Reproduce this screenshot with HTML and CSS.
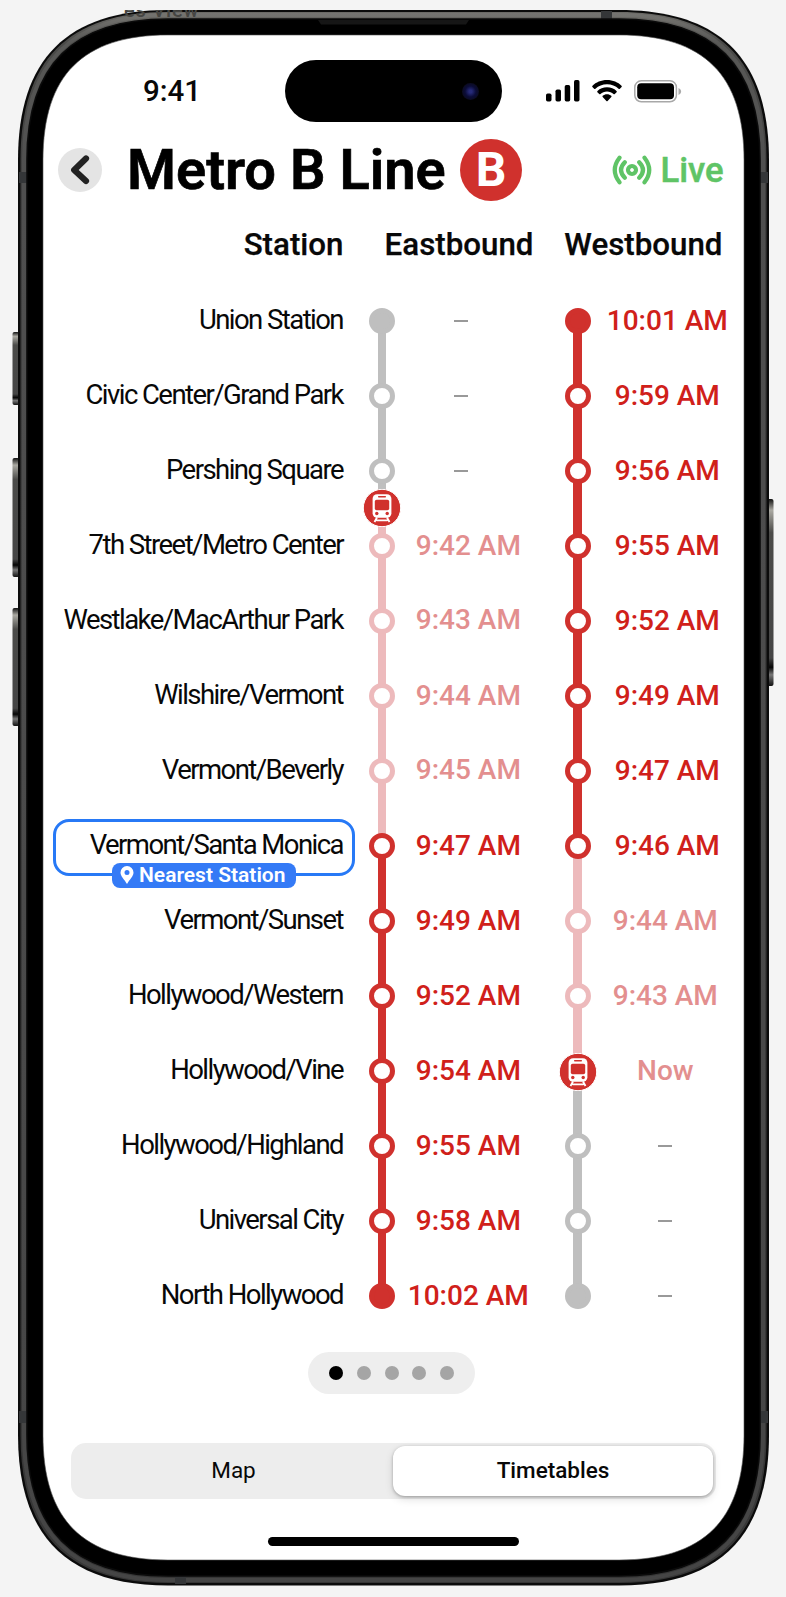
FILE: index.html
```html
<!DOCTYPE html>
<html lang="en">
<head>
<meta charset="utf-8">
<title>Metro B Line</title>
<link rel="stylesheet" href="styles.css">
</head>
<body>
<svg class="shell" viewBox="0 0 786 1597" aria-hidden="true">
  <defs>
    <linearGradient id="key" x1="0" x2="0" y1="0" y2="1">
      <stop offset="0" stop-color="#111"/><stop offset=".06" stop-color="#aaa9a2"/><stop offset=".18" stop-color="#4b4b49"/><stop offset=".85" stop-color="#454545"/><stop offset=".9" stop-color="#050505"/><stop offset=".94" stop-color="#777"/><stop offset="1" stop-color="#111"/>
    </linearGradient>
    <linearGradient id="metal" x1="0" x2="0" y1="0" y2="1">
      <stop offset="0" stop-color="#6b6a66"/><stop offset=".02" stop-color="#4a4a48"/><stop offset=".12" stop-color="#404040"/><stop offset="1" stop-color="#363636"/>
    </linearGradient>
  </defs>
  <g fill="url(#key)">
    <rect x="12.5" y="332" width="7" height="73" rx="2"/>
    <rect x="12.5" y="458" width="7" height="119" rx="2"/>
    <rect x="12.5" y="608" width="7" height="118" rx="2"/>
    <rect x="766" y="499" width="7.500" height="187" rx="2"/>
  </g>
  <path class="edge" d="M18 160C18 59 67 10 168 10H619C720 10 769 59 769 160V1435C769 1536 720 1585.500 619 1585.500H168C67 1585.500 18 1536 18 1435Z"/>
  <path fill="url(#metal)" d="M20.500 160C20.500 60 68 12 168 12H619C719 12 766.500 60 766.500 160V1435C766.500 1535 719 1583 619 1583H168C68 1583 20.500 1535 20.500 1435Z"/>
  <path class="sheen" d="M24 160C24 63 71 15 168 15H619C716 15 763 63 763 160V1435C763 1532 716 1580 619 1580H168C71 1580 24 1532 24 1435Z"/>
  <g class="band">
    <rect x="19" y="172" width="8" height="11"/><rect x="760" y="172" width="8" height="11"/>
    <rect x="19" y="1411" width="8" height="12"/><rect x="760" y="1411" width="8" height="12"/>
    <rect x="601" y="11" width="11" height="8"/><rect x="175" y="1576" width="11" height="8"/>
  </g>
  <path class="bezel" d="M27 160C27 65 73 19 168 19H619C714 19 760 65 760 160V1435C760 1530 714 1576 619 1576H168C73 1576 27 1530 27 1435Z"/>
  <path class="speaker" d="M318 20H469L466 24.500H321Z"/>
  <path class="glass" d="M43 160C43 75 83 35 168 35H619C704 35 744 75 744 160V1435C744 1520 704 1560 619 1560H168C83 1560 43 1520 43 1435Z"/>
</svg>
<div class="shade-text"><span>es View</span></div>

<main class="screen">
  <header class="status">
    <span class="clock">9:41</span>
    <div class="island"><i class="lens"></i></div>
    <div class="signals">
      <svg width="34" height="22" viewBox="0 0 34 22"><rect y="13.500" width="5.500" height="8" rx="1.700"/><rect x="9.500" y="9.500" width="5.500" height="12" rx="1.700"/><rect x="18.700" y="5" width="5.500" height="16.500" rx="1.700"/><rect x="28" y="0" width="5.500" height="21.500" rx="1.700"/></svg>
      <svg width="30" height="22" viewBox="0 0 30 22"><path d="M15 0C21 0 26 2.300 29.500 5.700C30 6.200 30 6.600 29.600 7L27.900 8.700C27.500 9.100 27 9.100 26.600 8.700C23.500 5.900 19.500 4.300 15 4.300S6.500 5.900 3.400 8.700C3 9.100 2.500 9.100 2.100 8.700L.4 7C0 6.600 0 6.200.5 5.700C4 2.300 9 0 15 0ZM15 7.300C18.900 7.300 22 8.700 24.500 10.900C25 11.300 25 11.800 24.600 12.200L22.800 14C22.400 14.400 21.900 14.300 21.500 14C19.800 12.400 17.600 11.500 15 11.500S10.200 12.400 8.500 14C8.100 14.300 7.600 14.400 7.200 14L5.400 12.200C5 11.800 5 11.300 5.500 10.900C8 8.700 11.100 7.300 15 7.300ZM15 14.200C16.700 14.200 18.200 14.800 19.300 15.800C19.700 16.100 19.700 16.600 19.300 17L15.600 21C15.200 21.300 14.800 21.300 14.400 21L10.700 17C10.300 16.600 10.300 16.100 10.700 15.800C11.800 14.800 13.300 14.200 15 14.200Z"/></svg>
      <svg width="48" height="23" viewBox="0 0 48 23"><rect x=".8" y=".8" width="41.600" height="21" rx="6.500" fill="none" stroke="#a8a8a8" stroke-width="1.500"/><rect x="3.200" y="3.300" width="36.800" height="16" rx="4"/><path d="M44.500 8C48 9.500 48 13.500 44.500 15Z" fill="#aaa"/></svg>
    </div>
  </header>

  <div class="titlebar">
    <button class="back" aria-label="Back"><svg width="44" height="44" viewBox="0 0 44 44"><path d="M28 10.500L16.200 22L28 33" fill="none" stroke="#222" stroke-width="6.200" stroke-linecap="round" stroke-linejoin="round"/></svg></button>
    <h1>Metro B Line</h1>
    <span class="badge">B</span>
    <div class="live">
      <svg width="40" height="30" viewBox="-20 -15 40 30" fill="none" stroke="#5fc466" stroke-width="4.200" stroke-linecap="round"><circle r="4" stroke-width="4.200"/><path d="M-7.200 -7.800Q-14.800 0 -7.200 7.800M7.200 -7.800Q14.800 0 7.200 7.800M-12.500 -12.300Q-22 0 -12.500 12.300M12.500 -12.300Q22 0 12.500 12.300"/></svg>
      <span>Live</span>
    </div>
  </div>

  <div class="columns"><span class="c-station">Station</span><span class="c-east">Eastbound</span><span class="c-west">Westbound</span></div>

  <section class="table" id="table"></section>

  <nav class="pager"><i class="on"></i><i></i><i></i><i></i><i></i></nav>
  <div class="tabs"><button>Map</button><button class="selected">Timetables</button></div>
  <div class="home"></div>
</main>

<template id="train"><svg class="train" width="38" height="38" viewBox="-19 -19 38 38"><circle r="18.700" fill="#d0312d" stroke="#fff" stroke-width="1"/><rect x="-9.400" y="-13.700" width="18.800" height="23.500" rx="4.500" fill="#fff"/><g fill="#d0312d"><rect x="-4" y="-12.100" width="8" height="1.500" rx=".7"/><rect x="-7.200" y="-8.200" width="14.400" height="10.500" rx="1.800"/><circle cx="-5.200" cy="5.500" r="1.700"/><circle cx="5.200" cy="5.500" r="1.700"/></g><path d="M-5 9.500L-7.500 14M5 9.500L7.500 14M-5.500 12.300H5.500" fill="none" stroke="#fff" stroke-width="1.800"/></svg></template>
<template id="nearest"><span class="nearest"><svg width="14" height="18" viewBox="0 0 14 18"><path fill="#fff" fill-rule="evenodd" d="M7 0A6.500 6.500 0 0 0 .5 6.500C.5 10.500 4.500 13.500 7 18C9.500 13.500 13.500 10.500 13.500 6.500A6.500 6.500 0 0 0 7 0ZM7 4A2.500 2.500 0 1 1 7 9A2.500 2.500 0 0 1 7 4Z"/></svg>Nearest Station</span></template>
<script src="app.js"></script>
</body>
</html>
```

FILE: styles.css
```css
*, ::before { box-sizing: border-box; }
body { margin: 0; width: 786px; height: 1597px; overflow: hidden; position: relative; background: #f4f4f4; font-family: Roboto, sans-serif; color: #080808; }
button { border: 0; padding: 0; background: none; font: inherit; color: inherit; }
.shell { position: absolute; inset: 0; width: 786px; height: 1597px; }
.edge { fill: #0b0b0b; }
.sheen { fill: none; stroke: #fff; stroke-opacity: .08; stroke-width: 4; }
.band { fill: #343638; }
.bezel { fill: #000; stroke: #0a0a0a; stroke-width: 1.500px; }
.speaker { fill: #161616; }
.glass { fill: #fff; stroke: #555; stroke-width: .6; }
.shade-text { position: absolute; left: 124px; top: 10px; width: 80px; height: 8px; overflow: hidden; color: #454542; font-size: 20px; font-weight: 500; letter-spacing: .8px; line-height: 24px; }
.shade-text span { display: block; margin-top: -12px; white-space: nowrap; }

.screen { position: relative; margin: 35px 42px 0 43px; height: 1525px; display: flex; flex-direction: column; }
.screen > * { flex-shrink: 0; }
.status { display: flex; height: 62px; margin-top: 25px; align-items: center; }
.clock { width: 242px; padding-left: 100px; font-size: 29.500px; font-weight: 500; line-height: 34px; }
.island { width: 217px; height: 62px; border-radius: 31px; background: #000; display: flex; align-items: center; justify-content: flex-end; padding-right: 23px; }
.lens { width: 17px; height: 17px; border-radius: 50%; background: radial-gradient(circle, #262a78 0 12%, #0b0c38 45%, #0b0b20 70%); }
.signals { display: flex; align-items: center; margin-left: 44px; gap: 12px; }

.titlebar { display: flex; align-items: center; height: 62px; margin-top: 17px; padding-left: 15px; }
.back { width: 44px; height: 44px; border-radius: 50%; background: #e4e4e4; }
.back svg { display: block; }
h1 { margin: 0 0 0 25px; width: 333px; font-size: 56px; line-height: 62px; font-weight: 600; white-space: nowrap; color: #000; -webkit-text-stroke: .7px #000; }
.badge { width: 62px; height: 62px; border-radius: 50%; background: #d0312d; color: #fff; font-size: 48px; line-height: 62px; font-weight: 700; text-align: center; }
.live { margin-left: 90px; display: flex; align-items: center; gap: 8.500px; color: #5fc466; font-size: 34.700px; line-height: 40px; font-weight: 500; -webkit-text-stroke: .5px #5fc466; }

.columns { display: flex; height: 46px; margin-top: 21px; font-size: 31.300px; line-height: 46px; font-weight: 500; white-space: nowrap; -webkit-text-stroke: .25px #080808; }
.c-station { width: 300.500px; text-align: right; }
.c-east { width: 190px; text-align: right; }
.c-west { width: 189px; text-align: right; }

.table { margin-top: 15.500px; }
.row { display: grid; grid-template-columns: 300px 78px 117.600px 78px 101.400px; height: 75px; align-items: center; }
.name { position: relative; text-align: right; font-size: 27.500px; letter-spacing: -1.550px; line-height: 34px; padding-bottom: 2px; white-space: nowrap; }
.here::before { content: ""; position: absolute; left: 10px; right: -12px; top: -9.500px; height: 57.500px; border: 3px solid #2779f6; border-radius: 16px; }
.nearest { position: absolute; left: 69px; top: 34.500px; width: 184px; height: 25px; border-radius: 8px; background: #347af6; color: #fff; display: flex; align-items: center; padding-left: 8px; gap: 5px; font-size: 21px; font-weight: 600; letter-spacing: 0; line-height: 25px; }
.node { position: relative; height: 75px; display: grid; grid-template-rows: 1fr 1fr; justify-items: center; }
.node > i { width: 8.500px; }
.node > b { position: absolute; left: 26px; top: 24.500px; width: 26px; height: 26px; border: 5px solid; border-radius: 50%; background: #fff; }
.node > b.full { background: currentColor; }
.gray { color: #bfbfbf; } .pink { color: #edbabc; } .red { color: #d0312d; }
.node > i { background: currentColor; }
.node > i.none { background: none; }
.train { position: absolute; left: 20px; top: 19.500px; }
.between { top: 55px; z-index: 2; }
.time { text-align: center; font-size: 28px; line-height: 34px; font-weight: 500; color: #d0201a; white-space: nowrap; display: flex; justify-content: center; }
.time.east { padding-right: 23px; }
.time.soft { color: #e38f8f; }
.time.west.soft, .time.west.empty { padding-right: 4px; }
.time.east.empty { padding-right: 38px; }
.time.up { padding-bottom: 3px; }
.dash { width: 14px; height: 2.500px; background: #999; }

.pager { align-self: flex-start; margin: 18.500px 0 0 265px; width: 167px; height: 42px; border-radius: 21px; background: #eee; display: flex; align-items: center; justify-content: center; gap: 13.900px; }
.pager i { width: 14px; height: 14px; border-radius: 50%; background: #a5a5a5; }
.pager .on { background: #000; }
.tabs { margin: 49px 28px 0; height: 56px; width: 645px; border-radius: 15px; background: #ededed; display: flex; padding: 3px; font-size: 22.500px; }
.tabs button { width: 319px; height: 50px; padding-bottom: 2px; border-radius: 12px; }
.tabs .selected { width: 320px; background: #fff; font-weight: 500; box-shadow: 0 1px 3px #0004, 0 3px 8px #0002; }
.home { margin: 38px 0 0 225px; width: 251px; height: 9px; border-radius: 5px; background: #000; }
```

FILE: app.js
```js
const stations = [
  ["Union Station", "", "10:01 AM"],
  ["Civic Center/Grand Park", "", "9:59 AM"],
  ["Pershing Square", "", "9:56 AM"],
  ["7th Street/Metro Center", "9:42 AM", "9:55 AM"],
  ["Westlake/MacArthur Park", "9:43 AM", "9:52 AM"],
  ["Wilshire/Vermont", "9:44 AM", "9:49 AM"],
  ["Vermont/Beverly", "9:45 AM", "9:47 AM"],
  ["Vermont/Santa Monica", "9:47 AM", "9:46 AM"],
  ["Vermont/Sunset", "9:49 AM", "9:44 AM"],
  ["Hollywood/Western", "9:52 AM", "9:43 AM"],
  ["Hollywood/Vine", "9:54 AM", "Now"],
  ["Hollywood/Highland", "9:55 AM", ""],
  ["Universal City", "9:58 AM", ""],
  ["North Hollywood", "10:02 AM", ""]
];
const last = stations.length - 1;
const train = document.getElementById("train").innerHTML;
const nearest = document.getElementById("nearest").innerHTML;
const eastColor = i => (i < 3 ? "gray" : i < 7 ? "pink" : "red");
const westColor = i => (i < 8 ? "red" : i < 11 ? "pink" : "gray");
const time = (text, cls) => `<div class="time ${cls} ${text ? "" : "empty"}">${text || '<i class="dash"></i>'}</div>`;

document.getElementById("table").innerHTML = stations.map(([name, east, west], i) => {
  const e = eastColor(i), w = westColor(i);
  const eastNode = `<i class="${i ? eastColor(i - 1 === 2 ? 3 : i - 1) : "none"}"></i><i class="${i < last ? e : "none"}"></i><b class="${e} ${i === 0 || i === last ? "full" : ""}"></b>${i === 2 ? train.replace('class="train"', 'class="train between"') : ""}`;
  const westDot = i === 10 ? train : `<b class="${w} ${i === 0 || i === last ? "full" : ""}"></b>`;
  const westNode = `<i class="${i ? w : "none"}"></i><i class="${i === last ? "none" : westColor(i + 1)}"></i>${westDot}`;
  return `<div class="row"><div class="name ${i === 7 ? "here" : ""}">${name}${i === 7 ? nearest : ""}</div><div class="node">${eastNode}</div>${time(east, "east " + (e === "pink" ? "soft" : "") + (i === 4 || i === 6 ? " up" : ""))}<div class="node">${westNode}</div>${time(west, "west " + (w === "pink" ? "soft" : ""))}</div>`;
}).join("");
```
